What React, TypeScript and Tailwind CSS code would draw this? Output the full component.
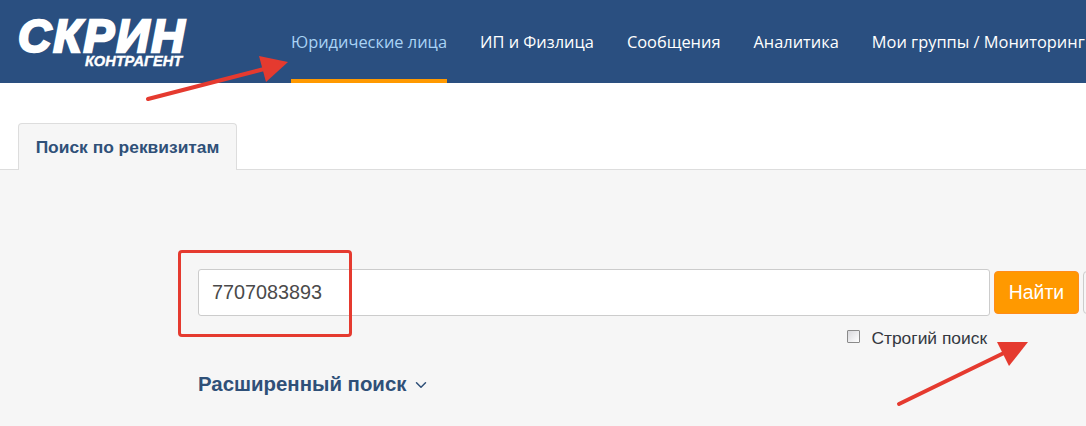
import { ChevronDown } from "lucide-react";

const navItems = ["Юридические лица", "ИП и Физлица", "Сообщения", "Аналитика", "Мои группы / Мониторинг"];

function Logo() {
  return (
    <div className="relative h-[70px] w-[174px] shrink-0 select-none font-['Liberation_Sans',sans-serif] italic font-bold text-white">
      <div className="absolute left-0 top-[17px] text-[46px] leading-[38px] tracking-[2px] [-webkit-text-stroke:2.5px_white] whitespace-nowrap">
        СКРИН
      </div>
      <div className="absolute left-[67px] top-[55px] text-[14.6px] leading-[13px] [-webkit-text-stroke:0.4px_white] whitespace-nowrap">
        КОНТРАГЕНТ
      </div>
    </div>
  );
}

export default function App() {
  return (
    <div className="relative h-[426px] w-full overflow-hidden bg-white font-['Liberation_Sans',sans-serif]">
      <header className="flex h-[83px] items-start overflow-hidden bg-[#2a4f80] pl-[18px]">
        <Logo />
        <nav className="ml-[99px] flex h-[83px] gap-[33px] font-['Open_Sans',sans-serif] text-[16.4px] whitespace-nowrap text-white">
          {navItems.map((item, i) => (
            <div
              key={item}
              className={`flex h-[83px] items-center border-b-4 pt-[5px] ${
                i === 0 ? "border-[#ff9900] text-[#a9d3f5]" : "border-transparent"
              }`}
            >
              {item}
            </div>
          ))}
        </nav>
      </header>

      <div className="border-b border-[#dddddd] pt-[40px] pl-[18px]">
        <div className="-mb-px flex h-[47px] w-[219px] items-center justify-center rounded-t-[4px] border border-b-0 border-[#dddddd] bg-[#f6f6f6] text-[17.4px] font-bold text-[#2f5078]">
          Поиск по реквизитам
        </div>
      </div>

      <main className="h-[256px] bg-[#f6f6f6] pt-[99px] pl-[198px]">
        <div className="flex w-[920px] items-center gap-[4px]">
          <div className="flex h-[47px] w-[792px] shrink-0 items-center rounded-[3px] border border-[#cccccc] bg-white pl-[13px] text-[19.8px] text-[#4a4a4a]">
            7707083893
          </div>
          <button
            type="button"
            className="h-[43px] w-[85px] shrink-0 rounded-[4px] border border-[#ff8c1a] bg-[#ff9900] text-[19.4px] text-white"
          >
            Найти
          </button>
          <div className="h-[43px] w-[40px] shrink-0 rounded-[4px] border border-[#cccccc] bg-[#f6f6f6]" />
        </div>

        <div className="mt-[12px] flex h-[20px] w-[792px] items-center justify-end gap-[11px] pr-[3px] text-[17.4px] text-[#33383f]">
          <span className="-mt-[3px] h-[13px] w-[13px] rounded-[1px] border border-[#8a8a8a] bg-gradient-to-br from-[#d8d8dc] to-white" />
          <span>Строгий поиск</span>
        </div>

        <div className="mt-[21px] flex items-center gap-[6px] text-[20.4px] font-bold text-[#2f5078]">
          Расширенный поиск
          <ChevronDown size={18} strokeWidth={2} className="mt-[2px]" />
        </div>
      </main>

      {/* пометки поверх скриншота */}
      <div className="absolute left-[178px] top-[250px] h-[87px] w-[174px] rounded-[4px] border-[3px] border-[#e53a2f]" />
      <svg className="absolute left-0 top-0" width="1086" height="426" viewBox="0 0 1086 426" fill="none">
        <line x1="148" y1="99" x2="268" y2="68" stroke="#e53a2f" strokeWidth="4" strokeLinecap="round" />
        <polygon points="288,62 259,56 266,82" fill="#e53a2f" />
        <line x1="899" y1="404" x2="1008" y2="351" stroke="#e53a2f" strokeWidth="4" strokeLinecap="round" />
        <polygon points="1028,342 997,342 1009,366" fill="#e53a2f" />
      </svg>
    </div>
  );
}
